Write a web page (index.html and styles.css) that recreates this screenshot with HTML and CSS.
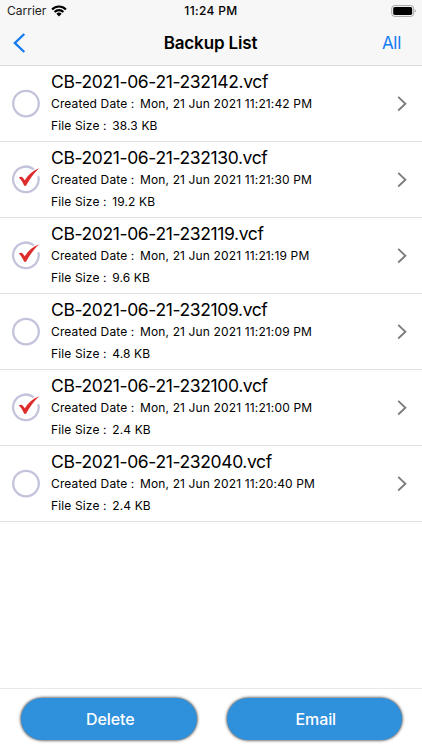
FILE: index.html
```
<!DOCTYPE html>
<html lang="en">
<head>
<meta charset="utf-8">
<title>Backup List</title>
<link rel="stylesheet" href="styles.css">
</head>
<body>
<svg class="defs" width="0" height="0">
  <symbol id="empty" viewBox="0 0 30 30"><circle cx="15" cy="14.6" r="12.8" fill="none" stroke="#c3c3dc" stroke-width="2.3"/></symbol>
  <symbol id="checked" viewBox="0 0 30 30"><path d="M22.8 4.3A12.8 12.8 0 1 0 27.3 11.2" fill="none" stroke="#c3c3dc" stroke-width="2.3"/><path d="M7.8 12.5C9.4 11.4 11 11.6 11.9 12.8L13.8 15.3C17.4 9.4 22 5.6 28.1 3.3C23.2 8 18.9 13.6 15 20.8H13.2C11.9 17.6 10.2 14.9 7.8 12.5Z" fill="#dc2c2b"/></symbol>
  <symbol id="chevron" viewBox="0 0 10 16"><path d="M1.2 .9L8.4 7.7L1.2 14.5" fill="none" stroke="#7d7d7d" stroke-width="1.9"/></symbol>
</svg>
<div class="screen">
  <header class="header">
    <div class="status">
      <div class="carrier"><span>Carrier</span>
        <svg width="16" height="12" viewBox="0 0 16 12"><g fill="none" stroke="#000" stroke-width="2.1"><path d="M1.1 4.4A9.8 9.8 0 0 1 14.9 4.4"/><path d="M3.6 7A6.2 6.2 0 0 1 12.4 7"/></g><path d="M5.4 8.8A3.7 3.7 0 0 1 10.6 8.8L8 11.4Z"/></svg>
      </div>
      <div class="time">11:24 PM</div>
      <svg class="battery" width="26" height="12" viewBox="0 0 26 12"><rect x=".7" y=".6" width="22" height="10.8" rx="3" fill="none" stroke="#a2a2a2" stroke-width="1"/><rect x="2.2" y="2.1" width="19" height="7.8" rx="1.6"/><path d="M23.8 4.1Q26 5.9 23.8 7.7Z" fill="#a2a2a2"/></svg>
    </div>
    <nav class="nav">
      <svg width="13" height="20" viewBox="0 0 13 20"><path d="M11.3 1L1.9 10L11.3 19" fill="none" stroke="#147cf0" stroke-width="2.4"/></svg>
      <h1>Backup List</h1>
      <span class="all">All</span>
    </nav>
  </header>
  <main class="list">
    <div class="row"><svg class="mark"><use href="#empty"/></svg><div class="info"><h2>CB-2021-06-21-232142.vcf</h2><p><span>Created Date :</span><span>Mon, 21 Jun 2021 11:21:42 PM</span></p><p><span>File Size :</span><span>38.3 KB</span></p></div><svg class="chevron"><use href="#chevron"/></svg></div>
    <div class="row"><svg class="mark"><use href="#checked"/></svg><div class="info"><h2>CB-2021-06-21-232130.vcf</h2><p><span>Created Date :</span><span>Mon, 21 Jun 2021 11:21:30 PM</span></p><p><span>File Size :</span><span>19.2 KB</span></p></div><svg class="chevron"><use href="#chevron"/></svg></div>
    <div class="row"><svg class="mark"><use href="#checked"/></svg><div class="info"><h2>CB-2021-06-21-232119.vcf</h2><p><span>Created Date :</span><span>Mon, 21 Jun 2021 11:21:19 PM</span></p><p><span>File Size :</span><span>9.6 KB</span></p></div><svg class="chevron"><use href="#chevron"/></svg></div>
    <div class="row"><svg class="mark"><use href="#empty"/></svg><div class="info"><h2>CB-2021-06-21-232109.vcf</h2><p><span>Created Date :</span><span>Mon, 21 Jun 2021 11:21:09 PM</span></p><p><span>File Size :</span><span>4.8 KB</span></p></div><svg class="chevron"><use href="#chevron"/></svg></div>
    <div class="row"><svg class="mark"><use href="#checked"/></svg><div class="info"><h2>CB-2021-06-21-232100.vcf</h2><p><span>Created Date :</span><span>Mon, 21 Jun 2021 11:21:00 PM</span></p><p><span>File Size :</span><span>2.4 KB</span></p></div><svg class="chevron"><use href="#chevron"/></svg></div>
    <div class="row"><svg class="mark"><use href="#empty"/></svg><div class="info"><h2>CB-2021-06-21-232040.vcf</h2><p><span>Created Date :</span><span>Mon, 21 Jun 2021 11:20:40 PM</span></p><p><span>File Size :</span><span>2.4 KB</span></p></div><svg class="chevron"><use href="#chevron"/></svg></div>
  </main>
  <footer class="actions"><button>Delete</button><button>Email</button></footer>
</div>
</body>
</html>
```
FILE: styles.css
```
* { box-sizing: border-box; }
body { margin: 0; background: #fff; color: #000; font-family: Inter, "Liberation Sans", sans-serif; }
h1, h2, p { margin: 0; font-weight: 400; white-space: nowrap; }
svg { display: block; flex: none; }
.defs { position: absolute; }
.screen { width: 422px; height: 750px; display: flex; flex-direction: column; overflow: hidden; }
.header { height: 66px; background: #f7f7f7; border-bottom: 1px solid #dcdcdc; }
.status { height: 21px; display: grid; grid-template-columns: 1fr auto 1fr; align-items: center; padding: 0 5px 0 7px; font-size: 12px; }
.carrier { display: flex; gap: 5px; align-items: center; color: #222; }
.time { font-weight: 500; letter-spacing: .35px; margin-right: 2px; }
.battery { justify-self: end; }
.nav { height: 44px; display: grid; grid-template-columns: 1fr auto 1fr; align-items: center; padding: 0 21px 0 13px; }
.nav h1 { font-size: 17px; font-weight: 600; letter-spacing: -.15px; margin: 0 8px 0 15px; }
.all { justify-self: end; color: #147cf0; font-size: 17px; letter-spacing: -.3px; }
.list { flex: 1; }
.row { height: 76px; display: flex; align-items: center; padding: 0 15px 0 11px; border-bottom: 1px solid #e1e1e1; }
.mark { width: 30px; height: 30px; }
.info { flex: 1; height: 75px; margin-left: 10px; padding-top: 4px; }
.info h2 { font-size: 17.5px; line-height: 24px; height: 23px; letter-spacing: -.38px; }
.info p { display: flex; gap: 5.5px; font-size: 12px; line-height: 22px; letter-spacing: .14px; }
.chevron { width: 10px; height: 16px; }
.actions { height: 62px; border-top: 1px solid #e8e8e8; display: flex; gap: 30px; padding: 9px 20px 0 21px; }
.actions button { flex: 1; height: 42px; border: 0; border-radius: 21px; padding: 0 0 0 3px; background: #2f90dc; color: #fff; font: 500 16px Inter, sans-serif; letter-spacing: -.1px; box-shadow: 0 0 3px .5px #444; }
```
